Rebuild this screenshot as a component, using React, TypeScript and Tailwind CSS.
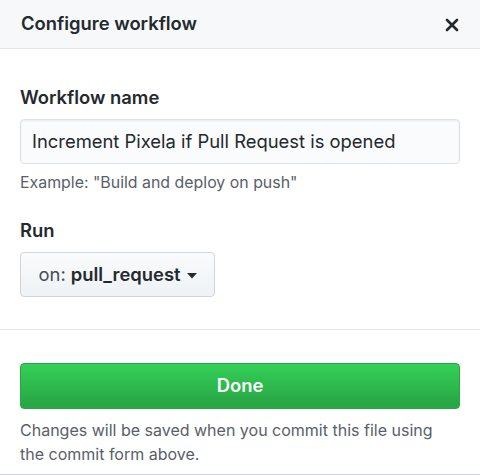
export default function App() {
  return (
    <div
      className="w-[480px] h-[475px] bg-white overflow-hidden text-[#24292e]"
      style={{ fontFamily: 'Inter, "Liberation Sans", Arial, sans-serif' }}
    >
      <div className="h-[49px] bg-[#f6f8fa] border-b border-[#e1e4e8] flex items-center justify-between pl-[21px] pr-[21px]">
        <div className="text-[18.4px] font-semibold">Configure workflow</div>
        <svg width="14" height="14" viewBox="0 0 14 14" className="mt-[1px]">
          <path d="M2 2 L12 12 M12 2 L2 12" stroke="#24292e" strokeWidth="2.6" strokeLinecap="round" />
        </svg>
      </div>
      <div className="px-[20px] pt-[36px] pb-[32px] border-b border-[#e1e4e8]">
        <div className="text-[18.4px] font-semibold leading-[24px] mb-[10px]">Workflow name</div>
        <div className="h-[45px] rounded-[4px] border border-[#dfe2e5] bg-[#fafbfc] flex items-center px-[11px] text-[18.4px] shadow-[inset_0_1px_2px_rgba(27,31,35,0.075)]">
          Increment Pixela if Pull Request is opened
        </div>
        <div className="text-[15.9px] text-[#586069] mt-[9px] leading-[20px]">Example: "Build and deploy on push"</div>
        <div className="text-[18.4px] font-semibold leading-[24px] mt-[25px] mb-[10px]">Run</div>
        <div className="w-[195px] h-[45px] rounded-[4px] border border-[#d1d5da] bg-[linear-gradient(-180deg,#fafbfc_0%,#eff3f6_90%)] flex items-center justify-center text-[18.4px]">
          <span className="text-[#444d56]">on:</span>
          <span className="font-semibold ml-[5px]">pull_request</span>
          <svg width="10" height="6" viewBox="0 0 10 6" className="ml-[6px] mt-[2px]">
            <path d="M0 0 L10 0 L5 5.5 Z" fill="#24292e" />
          </svg>
        </div>
      </div>
      <div className="px-[20px] pt-[33px] border-b border-[#d1d5da] h-[145px]">
        <div className="h-[46px] rounded-[4px] border border-[#28a745] bg-[linear-gradient(-180deg,#34d058_0%,#28a745_90%)] flex items-center justify-center text-white text-[18.4px] font-semibold">
          Done
        </div>
        <div className="text-[16px] text-[#586069] leading-[24px] mt-[9px] pr-[20px]">
          Changes will be saved when you commit this file using the commit form above.
        </div>
      </div>
    </div>
  );
}
